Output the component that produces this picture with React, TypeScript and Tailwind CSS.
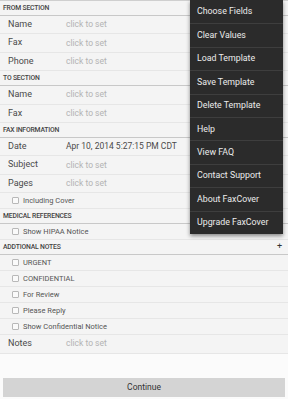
import React from 'react';

type Row =
  | { kind: 'field'; label: string; value?: string }
  | { kind: 'check'; label: string };

interface Section {
  title: string;
  plus?: boolean;
  rows: Row[];
}

const sections: Section[] = [
  {
    title: 'FROM SECTION',
    rows: [
      { kind: 'field', label: 'Name' },
      { kind: 'field', label: 'Fax' },
      { kind: 'field', label: 'Phone' },
    ],
  },
  {
    title: 'TO SECTION',
    rows: [
      { kind: 'field', label: 'Name' },
      { kind: 'field', label: 'Fax' },
    ],
  },
  {
    title: 'FAX INFORMATION',
    rows: [
      { kind: 'field', label: 'Date', value: 'Apr 10, 2014 5:27:15 PM CDT' },
      { kind: 'field', label: 'Subject' },
      { kind: 'field', label: 'Pages' },
      { kind: 'check', label: 'Including Cover' },
    ],
  },
  {
    title: 'MEDICAL REFERENCES',
    rows: [{ kind: 'check', label: 'Show HIPAA Notice' }],
  },
  {
    title: 'ADDTIONAL NOTES',
    plus: true,
    rows: [
      { kind: 'check', label: 'URGENT' },
      { kind: 'check', label: 'CONFIDENTIAL' },
      { kind: 'check', label: 'For Review' },
      { kind: 'check', label: 'Please Reply' },
      { kind: 'check', label: 'Show Confidential Notice' },
      { kind: 'field', label: 'Notes' },
    ],
  },
];

const menuItems = [
  'Choose Fields',
  'Clear Values',
  'Load Template',
  'Save Template',
  'Delete Template',
  'Help',
  'View FAQ',
  'Contact Support',
  'About FaxCover',
  'Upgrade FaxCover',
];

const FieldRow: React.FC<{ row: Row }> = ({ row }) => {
  if (row.kind === 'check') {
    return (
      <div className="h-[16px] flex items-center border-b border-[#e6e6e6] pl-[12px]">
        <span className="w-[7px] h-[7px] border border-[#b8b8b8] rounded-[1px] bg-[#fafafa]" />
        <span className="ml-[4px] text-[7.5px] text-[#555]">{row.label}</span>
      </div>
    );
  }
  return (
    <div className="h-[18.4px] flex items-center border-b border-[#e6e6e6]">
      <span className="w-[66px] pl-[8px] text-[9px] text-[#4a4a4a]">{row.label}</span>
      <span className={`text-[8.5px] whitespace-nowrap ${row.value ? 'text-[#4a4a4a]' : 'text-[#b3b3b3]'}`}>
        {row.value || 'click to set'}
      </span>
    </div>
  );
};

export default function App() {
  return (
    <div
      className="relative w-[288px] h-[399px] overflow-hidden bg-[#fbfbfb] flex flex-col"
      style={{ fontFamily: 'Roboto, "Noto Sans", sans-serif' }}
    >
      <div className="border-t border-[#cfcfcf] bg-[#f4f4f4]">
        {sections.map((s) => (
          <div key={s.title}>
            {/* Section header */}
            <div className="h-[15px] flex items-end justify-between pb-[3px] px-[3px] border-b border-[#c8c8c8]">
              <span className="text-[6.8px] font-medium text-[#444] tracking-tight leading-none">{s.title}</span>
              {s.plus && <span className="text-[9px] leading-none text-[#333] mr-[3px]">+</span>}
            </div>
            {s.rows.map((r, i) => (
              <FieldRow key={i} row={r} />
            ))}
          </div>
        ))}
      </div>

      <div className="flex-1" />

      <div className="mx-[3px] mb-[2px] h-[19px] bg-[#d4d4d4] flex items-center justify-center">
        <span className="text-[8.5px] text-[#333]">Continue</span>
      </div>

      {/* Overflow menu */}
      <div className="absolute top-0 right-[5px] w-[93px] bg-[#2b2b2b] shadow-[0_2px_4px_rgba(0,0,0,0.45)]">
        {menuItems.map((m, i) => (
          <div
            key={m}
            className={`h-[23.4px] flex items-center pl-[7px] text-[8.8px] text-[#ececec] ${i > 0 ? 'border-t border-[#3e3e3e]' : ''}`}
          >
            {m}
          </div>
        ))}
      </div>
    </div>
  );
}
